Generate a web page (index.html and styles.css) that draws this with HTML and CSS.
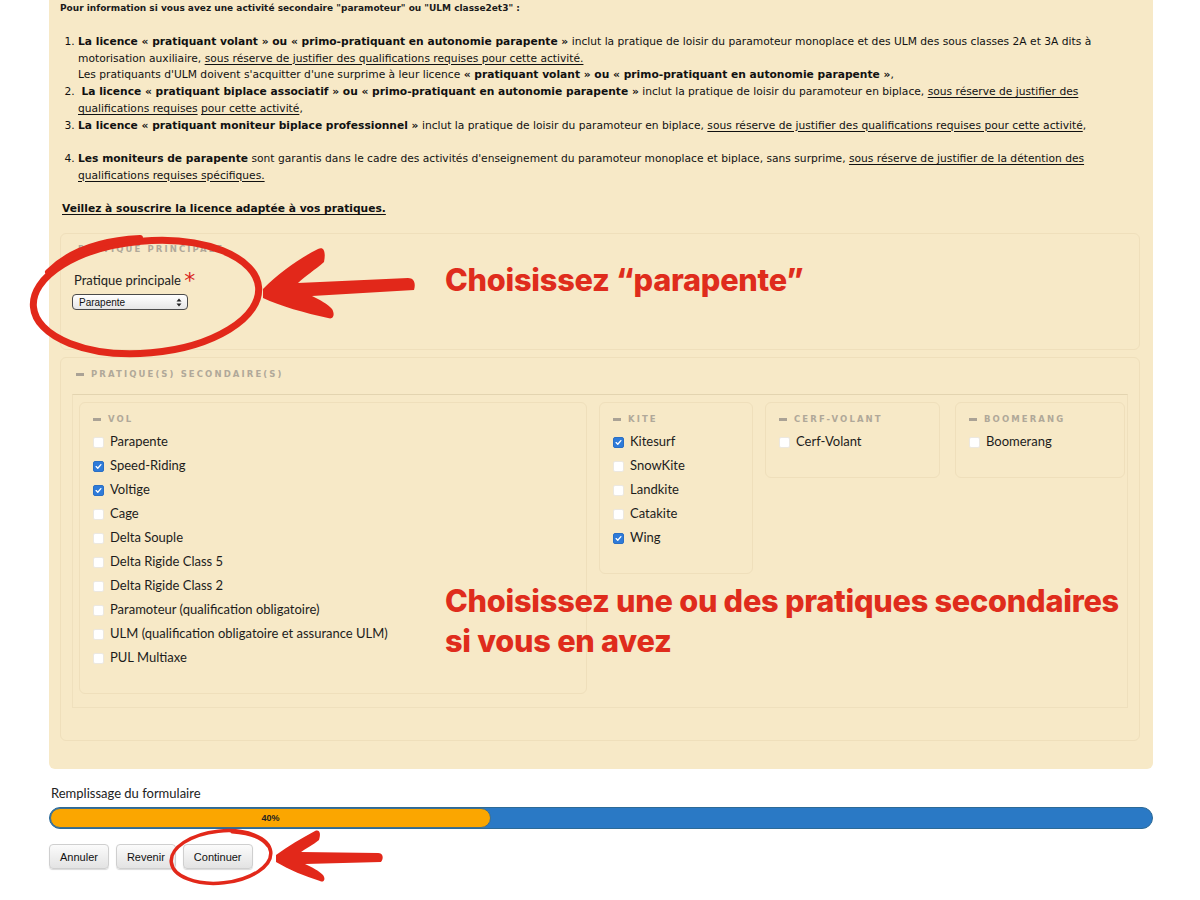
FILE: index.html
```html
<!DOCTYPE html>
<html lang="fr">
<head>
<meta charset="utf-8">
<title>Licence - pratiques</title>
<link rel="stylesheet" href="styles.css">
</head>
<body>
<div class="page">
  <div class="panel">
    <p class="intro">Pour information si vous avez une activité secondaire "paramoteur" ou "ULM classe2et3" :</p>
    <ol class="info">
      <li><b>La licence « pratiquant volant » ou « primo-pratiquant en autonomie parapente »</b> inclut la pratique de loisir du paramoteur monoplace et des ULM des sous classes 2A et 3A dits à<br>motorisation auxiliaire, <u>sous réserve de justifier des qualifications requises pour cette activité.</u><br>Les pratiquants d'ULM doivent s'acquitter d'une surprime à leur licence <b>« pratiquant volant » ou « primo-pratiquant en autonomie parapente »</b>,</li>
      <li>&nbsp;<b>La licence « pratiquant biplace associatif » ou « primo-pratiquant en autonomie parapente »</b> inclut la pratique de loisir du paramoteur en biplace, <u>sous réserve de justifier des<br>qualifications requises</u> <u>pour cette activité</u>,</li>
      <li class="gap"><b>La licence « pratiquant moniteur biplace professionnel »</b> inclut la pratique de loisir du paramoteur en biplace, <u>sous réserve de justifier des qualifications requises pour cette activité</u>,</li>
      <li><b>Les moniteurs de parapente</b> sont garantis dans le cadre des activités d'enseignement du paramoteur monoplace et biplace, sans surprime, <u>sous réserve de justifier de la détention des<br>qualifications requises spécifiques.</u></li>
    </ol>
    <p class="notice"><b><u>Veillez à souscrire la licence adaptée à vos pratiques.</u></b></p>

    <div class="fs fs-main">
      <div class="legend">PRATIQUE PRINCIPALE</div>
      <div class="field-label">Pratique principale <span class="req">*</span></div>
      <div class="select"><span>Parapente</span>
        <svg class="sel-arrows" width="6" height="9" viewBox="0 0 6 9"><path d="M0.5 3.5 L3 0.5 L5.5 3.5 Z M0.5 5.5 L3 8.5 L5.5 5.5 Z" fill="#222"/></svg>
      </div>
    </div>

    <div class="fs fs-second">
      <div class="legend"><span class="dash"></span>PRATIQUE(S) SECONDAIRE(S)</div>
      <div class="inner">
        <div class="sub sub-vol">
          <div class="legend"><span class="dash"></span>VOL</div>
          <div class="item"><span class="cb"></span>Parapente</div>
          <div class="item"><span class="cb on"><svg viewBox="0 0 11 11"><path d="M2.6 5.6 L4.6 7.6 L8.4 3.2" fill="none" stroke="#fff" stroke-width="1.6" stroke-linecap="round" stroke-linejoin="round"/></svg></span>Speed-Riding</div>
          <div class="item"><span class="cb on"><svg viewBox="0 0 11 11"><path d="M2.6 5.6 L4.6 7.6 L8.4 3.2" fill="none" stroke="#fff" stroke-width="1.6" stroke-linecap="round" stroke-linejoin="round"/></svg></span>Voltige</div>
          <div class="item"><span class="cb"></span>Cage</div>
          <div class="item"><span class="cb"></span>Delta Souple</div>
          <div class="item"><span class="cb"></span>Delta Rigide Class 5</div>
          <div class="item"><span class="cb"></span>Delta Rigide Class 2</div>
          <div class="item"><span class="cb"></span>Paramoteur (qualification obligatoire)</div>
          <div class="item"><span class="cb"></span>ULM (qualification obligatoire et assurance ULM)</div>
          <div class="item"><span class="cb"></span>PUL Multiaxe</div>
        </div>
        <div class="sub sub-kite">
          <div class="legend"><span class="dash"></span>KITE</div>
          <div class="item"><span class="cb on"><svg viewBox="0 0 11 11"><path d="M2.6 5.6 L4.6 7.6 L8.4 3.2" fill="none" stroke="#fff" stroke-width="1.6" stroke-linecap="round" stroke-linejoin="round"/></svg></span>Kitesurf</div>
          <div class="item"><span class="cb"></span>SnowKite</div>
          <div class="item"><span class="cb"></span>Landkite</div>
          <div class="item"><span class="cb"></span>Catakite</div>
          <div class="item"><span class="cb on"><svg viewBox="0 0 11 11"><path d="M2.6 5.6 L4.6 7.6 L8.4 3.2" fill="none" stroke="#fff" stroke-width="1.6" stroke-linecap="round" stroke-linejoin="round"/></svg></span>Wing</div>
        </div>
        <div class="sub sub-cerf">
          <div class="legend"><span class="dash"></span>CERF-VOLANT</div>
          <div class="item"><span class="cb"></span>Cerf-Volant</div>
        </div>
        <div class="sub sub-boom">
          <div class="legend"><span class="dash"></span>BOOMERANG</div>
          <div class="item"><span class="cb"></span>Boomerang</div>
        </div>
      </div>
    </div>
  </div>

  <div class="progress-label">Remplissage du formulaire</div>
  <div class="progress"><div class="progress-fill" style="width:40%">40%</div></div>

  <div class="buttons">
    <button class="btn">Annuler</button>
    <button class="btn">Revenir</button>
    <button class="btn">Continuer</button>
  </div>
</div>

<div class="annot">
  <svg class="annot-svg" width="1200" height="900" viewBox="0 0 1200 900">
    <g fill="none" stroke="#e2281a" stroke-linecap="round">
      <ellipse cx="146" cy="297" rx="113" ry="56" transform="rotate(-5 146 297)" stroke-width="7"/>
      <path d="M48 272 C70 250 100 240 140 238" stroke-width="6"/>
      <ellipse cx="221" cy="857" rx="50" ry="26" transform="rotate(-6 221 857)" stroke-width="3.5"/>
      <path d="M232 832 C250 833 262 838 268 846" stroke-width="3"/>
    </g>
    <g fill="#e2281a">
      <path d="M263 289 C280 272 300 258 318 249 C324 246 326 252 324 262 C315 270 305 276 298 283 L408 278 C414 278 416 283 414 290 L312 296 C320 300 328 304 332 309 C335 314 334 320 328 318 C305 313 280 306 263 298 Z"/>
      <path d="M276 855 C288 846 302 838 315 831 C320 829 321 834 319 840 C313 845 306 848 301 852 L378 853 C383 853 384 858 381 862 L305 864 C312 867 319 871 323 875 C326 879 324 883 320 881 C304 876 290 870 276 862 Z"/>
    </g>
  </svg>
  <div class="note note-1">Choisissez “parapente”</div>
  <div class="note note-2">Choisissez une ou des pratiques secondaires<br>si vous en avez</div>
</div>
</body>
</html>
```

FILE: styles.css
```css
* { box-sizing: border-box; }
html, body { margin: 0; padding: 0; background: #fff; }
body {
  width: 1200px;
  height: 900px;
  position: relative;
  overflow: hidden;
  font-family: "Lato", "Open Sans", sans-serif;
  color: #222;
}
.page { padding: 0 47px 0 49px; }

.panel {
  background: #f7e9c7;
  border-radius: 0 0 6px 6px;
  padding: 0 13px 28px 11px;
}

.intro {
  margin: 0;
  padding-top: 2px;
  font-family: "DejaVu Sans", sans-serif;
  font-size: 9px;
  line-height: 13px;
  font-weight: bold;
  color: #1a1a1a;
}

.info {
  margin: 19px 0 0;
  padding-left: 18px;
  font-family: "DejaVu Sans", sans-serif;
  font-size: 10.7px;
  line-height: 16.7px;
  color: #111;
  white-space: nowrap;
}
.info li { padding-left: 0; }
.info li.gap { margin-bottom: 16.7px; }
.info u { text-underline-offset: 2px; }

.notice {
  margin: 17px 0 0 2px;
  font-family: "DejaVu Sans", sans-serif;
  font-size: 10.7px;
  line-height: 16.7px;
  color: #111;
}
.notice u { text-underline-offset: 2px; }

.fs {
  border: 1px solid #efdfbb;
  border-radius: 6px;
}
.legend {
  display: flex;
  align-items: center;
  font-family: "DejaVu Sans", sans-serif;
  font-size: 8.5px;
  font-weight: bold;
  letter-spacing: 2.1px;
  line-height: 12px;
  color: #b0a899;
}
.dash {
  display: inline-block;
  width: 8px;
  height: 3px;
  background: #aaa295;
  margin-right: 7px;
}

.fs-main {
  margin-top: 15px;
  height: 117px;
  padding: 9px 0 0 11px;
}
.fs-main .legend { padding-left: 6px; }
.field-label {
  margin-top: 17px;
  font-size: 13px;
  line-height: 16px;
  padding-left: 2px;
  color: #222;
}
.req {
  color: #d9251c;
  font-family: "DejaVu Sans", sans-serif;
  font-size: 22px;
  line-height: 10px;
  vertical-align: -3px;
}
.select {
  margin-top: 6px;
  width: 116px;
  height: 16px;
  border: 1px solid #4a4a4a;
  border-radius: 4px;
  background: linear-gradient(#ffffff, #e6e6e6);
  display: flex;
  align-items: center;
  justify-content: space-between;
  padding: 0 5px 0 6px;
  font-family: "Liberation Sans", Arial, sans-serif;
  font-size: 10px;
  color: #111;
}

.fs-second {
  margin-top: 7px;
  height: 384px;
  padding: 10px 11px 0 11px;
}
.fs-second > .legend { padding-left: 4px; }
.inner {
  margin-top: 14px;
  height: 314px;
  border-top: 1px solid #e3d4b0;
  border-left: 1px solid #efe0bd;
  border-right: 1px solid #efe0bd;
  border-bottom: 1px solid #efe0bd;
  padding: 7px 0 0 6px;
  display: flex;
  align-items: flex-start;
}
.sub {
  border: 1px solid #efdfbb;
  border-radius: 6px;
  padding: 10px 0 24px 13px;
}
.sub .legend { margin-bottom: 4px; }
.sub-vol { width: 508px; }
.sub-kite { width: 154px; margin-left: 12px; }
.sub-cerf { width: 175px; margin-left: 12px; }
.sub-boom { width: 170px; margin-left: 15px; }

.item {
  display: flex;
  align-items: center;
  height: 24px;
  font-size: 13px;
  color: #1c1c1c;
}
.cb {
  display: inline-flex;
  width: 11px;
  height: 11px;
  margin-right: 6px;
  margin-top: 3px;
  border-radius: 2px;
  background: #fff;
  border: 1px solid #ece8e0;
  flex: none;
}
.cb.on { background: #2f7bd9; border-color: #2a6fc4; }
.cb svg { width: 100%; height: 100%; display: block; }

.progress-label {
  margin-top: 16px;
  padding-left: 2px;
  font-size: 13px;
  line-height: 16px;
  color: #222;
}
.progress {
  margin-top: 6px;
  height: 22px;
  border-radius: 11px;
  background: #2a79c5;
  border: 1px solid #2d6a96;
  overflow: hidden;
}
.progress-fill {
  height: 100%;
  background: #fba600;
  border-radius: 10px;
  border: 1px solid #3f6f8e;
  font-family: "Liberation Sans", Arial, sans-serif;
  font-size: 9px;
  font-weight: bold;
  color: #222;
  display: flex;
  align-items: center;
  justify-content: center;
}

.buttons {
  margin-top: 15px;
  display: flex;
  gap: 7px;
}
.btn {
  height: 25px;
  padding: 0 10px;
  border: 1px solid #cfcfcf;
  border-radius: 4px;
  background: linear-gradient(#fbfbfb, #e3e3e3);
  box-shadow: 0 1px 1px rgba(0,0,0,0.15);
  font-family: "Liberation Sans", Arial, sans-serif;
  font-size: 11px;
  color: #111;
}

.annot {
  position: absolute;
  left: 0;
  top: 0;
  width: 1200px;
  height: 900px;
  pointer-events: none;
}
.annot-svg { position: absolute; left: 0; top: 0; }
.note {
  position: absolute;
  left: 445px;
  font-family: "Inter", "Open Sans", sans-serif;
  font-weight: 800;
  font-size: 30.7px;
  color: #df2c1c;
  letter-spacing: -0.25px;
}
.note-1 { top: 260px; line-height: 40px; }
.note-2 { top: 581px; line-height: 40px; }
```
